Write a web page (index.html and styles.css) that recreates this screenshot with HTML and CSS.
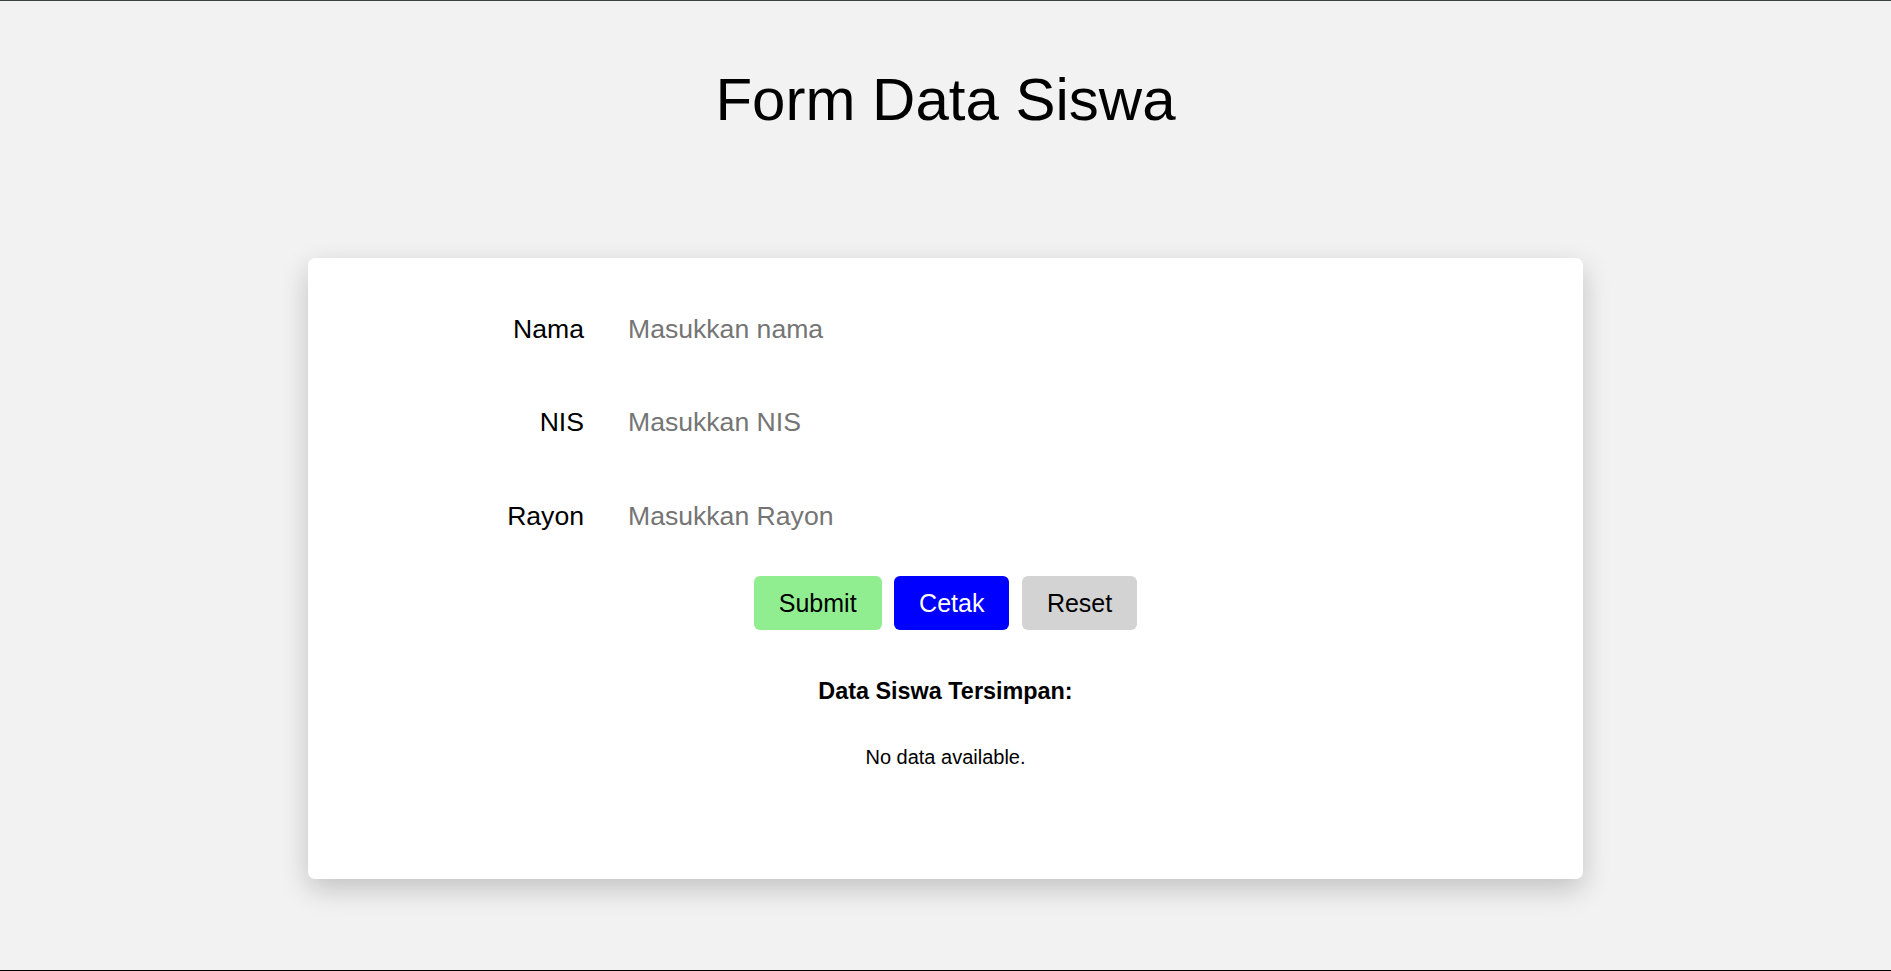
FILE: index.html
```html
<!DOCTYPE html>
<html lang="id">
<head>
<meta charset="utf-8">
<title>Form Data Siswa</title>
<link rel="stylesheet" href="styles.css">
</head>
<body>
  <h1 class="title">Form Data Siswa</h1>
  <div class="card">
    <form class="form">
      <div class="fields">
        <div class="row">
          <label class="label" for="nama">Nama</label>
          <input class="field" id="nama" type="text" placeholder="Masukkan nama">
        </div>
        <div class="row">
          <label class="label" for="nis">NIS</label>
          <input class="field" id="nis" type="text" placeholder="Masukkan NIS">
        </div>
        <div class="row">
          <label class="label" for="rayon">Rayon</label>
          <input class="field" id="rayon" type="text" placeholder="Masukkan Rayon">
        </div>
      </div>
      <div class="actions">
        <button type="button" class="btn btn-submit">Submit</button>
        <button type="button" class="btn btn-print">Cetak</button>
        <button type="reset" class="btn btn-reset">Reset</button>
      </div>
    </form>
    <div class="saved">
      <h3 class="saved-title">Data Siswa Tersimpan:</h3>
      <p class="saved-empty">No data available.</p>
    </div>
  </div>
</body>
</html>
```
FILE: styles.css
```css
html {
  box-sizing: border-box;
  height: 100%;
  border-top: 1px solid #3b4141;
  border-bottom: 1px solid #000;
  background: #f2f2f2;
}
*, *::before, *::after { box-sizing: inherit; }

body {
  margin: 0;
  padding: 1px 0 70px;
  background: #f2f2f2;
  font-family: "Liberation Sans", Arial, sans-serif;
  color: #000;
}

.title {
  margin: 63px 0 0;
  font-size: 60px;
  font-weight: 400;
  line-height: 69px;
  text-align: center;
}

.card {
  width: 1275px;
  margin: 124px auto 0;
  background: #fff;
  border-radius: 7px;
  box-shadow: 0 10px 28px rgba(0, 0, 0, 0.2);
  padding: 43px 25px 110px;
}

.form {
  display: flex;
  flex-direction: column;
}

.fields {
  display: flex;
  flex-direction: column;
  gap: 38px;
}

.row {
  display: flex;
  align-items: center;
  height: 55.75px;
}

.label {
  width: 251px;
  flex: none;
  text-align: right;
  font-size: 26.6px;
  line-height: 30.6px;
}

.field {
  margin-left: 31px;
  padding: 12.5px 13px;
  width: 520px;
  border: none;
  outline: none;
  background: transparent;
  font-family: "Liberation Sans", Arial, sans-serif;
  font-size: 26.6px;
  line-height: 30.6px;
  color: #000;
}
.field::placeholder { color: #757575; }

.actions {
  display: flex;
  justify-content: center;
  gap: 12.5px;
  margin-top: 32px;
}

.btn {
  border: none;
  border-radius: 6px;
  padding: 12.5px 25px;
  font-family: "Liberation Sans", Arial, sans-serif;
  font-size: 25px;
  line-height: 28.75px;
  color: #000;
  cursor: pointer;
}
.btn-submit { background: #90ee90; }
.btn-print { background: #0000ff; color: #fff; }
.btn-reset { background: #d3d3d3; }

.saved {
  text-align: center;
  margin-top: 47.5px;
}

.saved-title {
  margin: 0;
  font-size: 23.4px;
  line-height: 26.9px;
  font-weight: 700;
}

.saved-empty {
  margin: 41.5px 0 0;
  font-size: 20px;
  line-height: 23px;
}
```
